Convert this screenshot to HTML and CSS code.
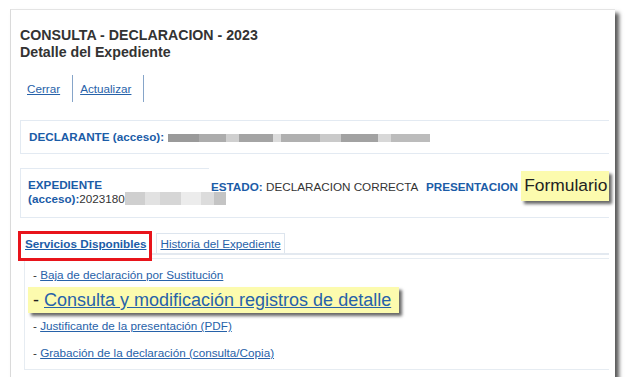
FILE: index.html
```html
<!DOCTYPE html>
<html lang="es">
<head>
    <meta charset="UTF-8">
    <title>Consulta - Declaracion - 2023</title>
    <link rel="stylesheet" href="styles.css">
</head>
<body>
    <div class="panel">
        <h1 class="title">CONSULTA - DECLARACION - 2023<br>Detalle del Expediente</h1>

        <div class="toolbar">
            <a href="#" class="tool">Cerrar</a>
            <a href="#" class="tool">Actualizar</a>
        </div>

        <div class="declarante">
            <span class="label">DECLARANTE (acceso):</span>
            <span class="blur blur-long"></span>
        </div>

        <div class="expediente">
            <div class="exp-cell">
                <span class="label">EXPEDIENTE</span><br>
                <span class="label">(acceso):</span>2023180<span class="blur blur-short"></span>
            </div>
            <div class="estado-cell">
                <span class="label">ESTADO:</span> DECLARACION CORRECTA
                <span class="label presentacion">PRESENTACION</span>
                <span class="mark mark-form">Formulario</span>
            </div>
        </div>

        <!-- pestañas -->
        <div class="tabs">
            <a href="#" class="tab tab-active">Servicios Disponibles</a>
            <a href="#" class="tab">Historia del Expediente</a>
        </div>

        <div class="services">
            <div class="item">- <a href="#">Baja de declaración por Sustitución</a></div>
            <div class="item-big"><span class="mark mark-big">- <a href="#">Consulta y modificación registros de detalle</a></span></div>
            <div class="item item-3">- <a href="#">Justificante de la presentación (PDF)</a></div>
            <div class="item item-4">- <a href="#">Grabación de la declaración (consulta/Copia)</a></div>
        </div>
    </div>
</body>
</html>
```

FILE: styles.css
```css
body {
    margin: 0;
    background-color: white;
    font-family: "Liberation Sans", Arial, sans-serif;
    font-size: 11.7px;
    color: #333;
}

a {
    color: #2762a9;
}

.panel {
    margin: 9px 0 0 10px;
    width: 605px;
    height: 368px;
    box-sizing: border-box;
    padding: 17px 6px 0 9px;
    border-top: 1px solid #e4e4e4;
    border-left: 1px solid #dadada;
    background-color: #fff;
    box-shadow: 4px 4px 4px rgba(0, 0, 0, 0.65);
}

.title {
    margin: 0;
    font-size: 14.2px;
    line-height: 17px;
    color: #333;
}

.toolbar {
    display: flex;
    margin-top: 14px;
    height: 27px;
}

.tool {
    line-height: 27px;
    padding: 0 12px 0 7px;
    border-right: 1px solid #86a5c9;
}

.label {
    font-weight: bold;
    color: #1b5ca7;
}

.declarante {
    margin-top: 18px;
    height: 34px;
    box-sizing: border-box;
    padding: 0 8px;
    line-height: 32px;
    border: 1px solid #e3eaf2;
    border-right: none;
    white-space: nowrap;
}

.blur {
    display: inline-block;
    vertical-align: middle;
}

.blur-long {
    width: 262px;
    height: 8px;
    margin-left: 1px;
    background: linear-gradient(90deg, #9a9a9a 0 12%, #acacac 12% 22%, #cfcfcf 22% 27%, #a4a4a4 27% 40%, #dcdcdc 40% 43%, #b0b0b0 43% 58%, #cacaca 58% 66%, #a2a2a2 66% 80%, #d8d8d8 80% 85%, #bcbcbc 85% 100%);
}

.blur-short {
    width: 101px;
    height: 13px;
    vertical-align: -2px;
    background: linear-gradient(90deg, #cfcfcf 0 20%, #e2e2e2 20% 35%, #d6d6d6 35% 55%, #ececec 55% 75%, #dcdcdc 75% 88%, #c4c4c4 88% 100%);
}

.expediente {
    display: flex;
    margin-top: 14px;
    border-bottom: 1px solid #e3eaf2;
    line-height: 14px;
    white-space: nowrap;
}

.exp-cell {
    width: 189px;
    box-sizing: border-box;
    padding: 9px 0 11px 7px;
    border-top: 1px solid #e3eaf2;
    border-left: 1px solid #e3eaf2;
}

.estado-cell {
    margin-left: 2px;
    padding-top: 10px;
}

.presentacion {
    margin-left: 5px;
}

.mark {
    background-color: #fcfbae;
    box-shadow: 3px 3px 3px rgba(0, 0, 0, 0.6);
}

.mark-form {
    font-size: 17.4px;
    padding: 4px 2px 6px 3px;
    color: #222;
}

.tabs {
    display: flex;
    align-items: flex-end;
    margin-top: 13px;
    margin-left: -2px;
    border-bottom: 2px solid #e3e9f0;
}

.tab {
    line-height: 14px;
    height: 20px;
    box-sizing: border-box;
    padding: 3px 3px 0 3px;
    margin-left: 4px;
    border: 1px solid #dde5ee;
    border-bottom: none;
}

.tab-active {
    position: relative;
    z-index: 1;
    height: 30px;
    margin: 0 0 -8px 0;
    padding: 3px 3px 0 4px;
    border: 3px solid #e8141b;
    background-color: #fff;
    font-weight: bold;
    color: #1b5ca7;
}

.services {
    margin: 3px 0 0 4px;
    height: 112px;
    box-sizing: border-box;
    padding-top: 9px;
    border: 1px solid #e6ecf2;
    border-right: none;
    line-height: 14px;
}

.item {
    padding-left: 8px;
}

.item-big {
    margin-top: 5px;
    padding-left: 3px;
}

.mark-big {
    display: inline-block;
    font-size: 18px;
    line-height: 26px;
    padding: 0 8px 0 5px;
    color: #222;
}

.item-3 {
    margin-top: 6px;
}

.item-4 {
    margin-top: 13px;
}
```
